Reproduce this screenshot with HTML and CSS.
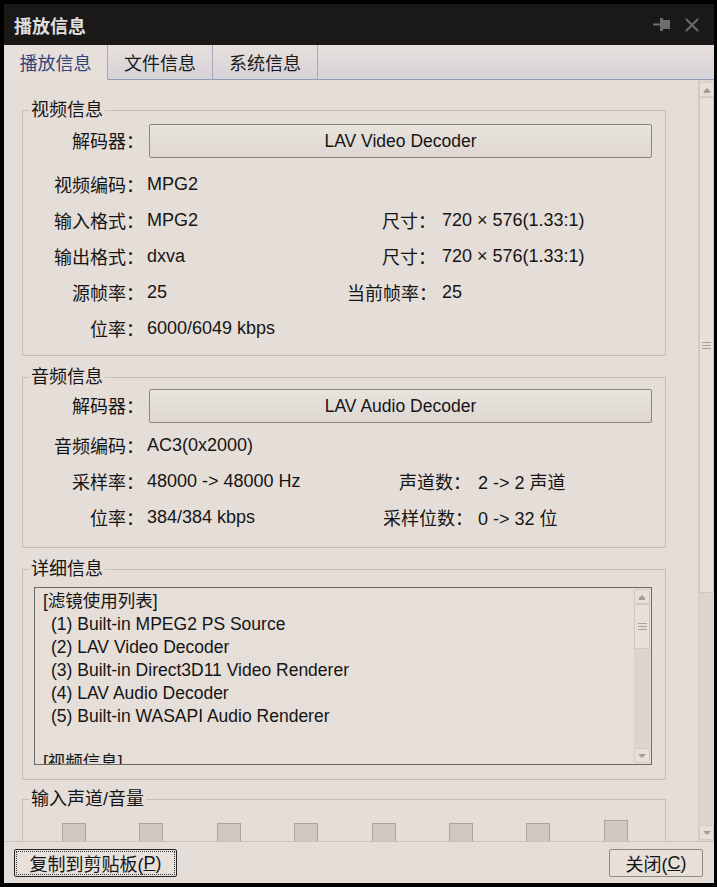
FILE: index.html
```html
<!DOCTYPE html>
<html lang="zh-CN">
<head>
    <meta charset="UTF-8">
    <title>播放信息</title>
    <link rel="stylesheet" href="styles.css">
</head>
<body>
    <div class="window">
        <div class="titlebar">
            <span class="title">播放信息</span>
            <div class="title-icons">
                <svg class="pin" width="17" height="13" viewBox="0 0 17 13">
                    <rect x="0" y="5.5" width="8" height="2" fill="#6e6e6e"/>
                    <rect x="7" y="0" width="3" height="13" fill="#6e6e6e"/>
                    <rect x="10" y="2" width="7" height="9" fill="#6e6e6e"/>
                </svg>
                <svg class="close" width="14" height="14" viewBox="0 0 14 14">
                    <path d="M1 1 L13 13 M13 1 L1 13" stroke="#6b6b6b" stroke-width="2"/>
                </svg>
            </div>
        </div>

        <div class="tabs">
            <div class="tab active">播放信息</div>
            <div class="tab">文件信息</div>
            <div class="tab">系统信息</div>
            <div class="tab-fill"></div>
        </div>

        <div class="body">
            <div class="scroll-content">
                <fieldset class="group">
                    <legend>视频信息</legend>
                    <div class="grid video-grid">
                        <div class="label">解码器：</div>
                        <div class="decoder-btn">LAV Video Decoder</div>

                        <div class="label">视频编码：</div>
                        <div class="value wide">MPG2</div>

                        <div class="label">输入格式：</div>
                        <div class="value">MPG2</div>
                        <div class="label label2">尺寸：</div>
                        <div class="value">720 × 576(1.33:1)</div>

                        <div class="label">输出格式：</div>
                        <div class="value">dxva</div>
                        <div class="label label2">尺寸：</div>
                        <div class="value">720 × 576(1.33:1)</div>

                        <div class="label">源帧率：</div>
                        <div class="value">25</div>
                        <div class="label label2">当前帧率：</div>
                        <div class="value">25</div>

                        <div class="label">位率：</div>
                        <div class="value wide">6000/6049 kbps</div>
                    </div>
                </fieldset>

                <fieldset class="group audio">
                    <legend>音频信息</legend>
                    <div class="grid audio-grid">
                        <div class="label">解码器：</div>
                        <div class="decoder-btn">LAV Audio Decoder</div>

                        <div class="label">音频编码：</div>
                        <div class="value wide">AC3(0x2000)</div>

                        <div class="label">采样率：</div>
                        <div class="value">48000 -&gt; 48000 Hz</div>
                        <div class="label label2">声道数：</div>
                        <div class="value">2 -&gt; 2 声道</div>

                        <div class="label">位率：</div>
                        <div class="value">384/384 kbps</div>
                        <div class="label label2">采样位数：</div>
                        <div class="value">0 -&gt; 32 位</div>
                    </div>
                </fieldset>

                <fieldset class="group details">
                    <legend>详细信息</legend>
                    <div class="textbox">
                        <div class="textbox-text">
                            <div class="line">[滤镜使用列表]</div>
                            <div class="line item">(1) Built-in MPEG2 PS Source</div>
                            <div class="line item">(2) LAV Video Decoder</div>
                            <div class="line item">(3) Built-in Direct3D11 Video Renderer</div>
                            <div class="line item">(4) LAV Audio Decoder</div>
                            <div class="line item">(5) Built-in WASAPI Audio Renderer</div>
                            <div class="line">&nbsp;</div>
                            <div class="line">[视频信息]</div>
                        </div>
                        <div class="sb small">
                            <div class="sb-btn"><span class="arrow-up"></span></div>
                            <div class="sb-thumb small-thumb"><span class="grip"></span></div>
                            <div class="sb-track"></div>
                            <div class="sb-btn"><span class="arrow-down"></span></div>
                        </div>
                    </div>
                </fieldset>

                <fieldset class="group volume">
                    <legend>输入声道/音量</legend>
                    <div class="bars">
                        <div class="bar"></div>
                        <div class="bar"></div>
                        <div class="bar"></div>
                        <div class="bar"></div>
                        <div class="bar"></div>
                        <div class="bar"></div>
                        <div class="bar"></div>
                        <div class="bar tall"></div>
                    </div>
                </fieldset>
            </div>

            <div class="sb main">
                <div class="sb-btn"><span class="arrow-up"></span></div>
                <div class="sb-thumb main-thumb"><span class="grip"></span></div>
                <div class="sb-track"></div>
                <div class="sb-btn"><span class="arrow-down"></span></div>
            </div>
        </div>

        <div class="footer">
            <div class="btn copy-btn"><span>复制到剪贴板(<u>P</u>)</span></div>
            <div class="btn close-btn">关闭(<u>C</u>)</div>
        </div>
    </div>
</body>
</html>
```

FILE: styles.css
```css
* { margin: 0; padding: 0; box-sizing: border-box; }
body { background: #000; font-family: "Liberation Sans", "Noto Sans CJK SC", sans-serif; font-size: 18px; color: #151515; }

.window { width: 717px; height: 887px; border: 4px solid #000; border-right-width: 3px; display: flex; flex-direction: column; background: #e5ddd7; }

/* title bar */
.titlebar { height: 41px; background: #1b1918; display: flex; align-items: center; justify-content: space-between; padding: 0 15px 0 10px; }
.title { color: #dedede; font-size: 18px; font-weight: bold; }
.title-icons { display: flex; align-items: center; gap: 15px; }
.title-icons svg { display: block; }

/* tabs */
.tabs { height: 35px; display: flex; background: linear-gradient(#e7e0db, #d5d1d8); }
.tab { height: 35px; display: flex; align-items: center; justify-content: center; width: 105px; border-right: 1px solid #a4aabd; border-bottom: 1px solid #949cb5; color: #1a1a1a; }
.tab.active { width: 104px; background: #e6dfda; border-bottom-color: #e6dfda; color: #34457a; }
.tab-fill { flex: 1; border-bottom: 1px solid #949cb5; }

/* body + scroll */
.body { height: 761px; display: flex; }
.scroll-content { flex: 1; overflow: hidden; padding-top: 20px; }

.group { margin: 0 0 0 18px; padding: 0; width: 644px; min-width: 0; border: 1px solid #c6beb9; }
.group legend { margin-left: 6px; padding: 0 2px; line-height: 20px; color: #151515; }
.audio { margin-top: 11px; }
.details { margin-top: 11px; padding-bottom: 14px; }
.volume { margin-top: 9px; height: 90px; }

.grid { display: grid; grid-auto-rows: 36px; align-items: center; padding-bottom: 9px; }
.video-grid { grid-template-columns: 124px 200px 95px 1fr; grid-template-rows: 46px; }
.audio-grid { grid-template-columns: 124px 236px 95px 1fr; grid-template-rows: 40px; padding-bottom: 12px; }
.video-grid .decoder-btn { margin-top: 4px; }
.audio-grid .decoder-btn { margin-top: 2px; }

.label { text-align: right; padding-right: 3px; white-space: nowrap; }
.label2 { padding-right: 6px; }
.audio-grid .label2 { padding-right: 7px; }
.video-grid > .label:first-child { align-self: start; margin-top: 7px; }
.audio-grid > .label:first-child { align-self: start; margin-top: 5px; }
.value { white-space: nowrap; }
.wide { grid-column: 2 / 5; }

.decoder-btn { grid-column: 2 / 5; height: 34px; margin-left: 2px; margin-right: 13px; border: 1px solid #8b8580; border-radius: 2px; background: linear-gradient(#e9e3de, #ddd6d1); display: flex; align-items: center; justify-content: center; align-self: start; font-size: 17.5px; }

/* detail text box */
.textbox { margin: 8px 13px 0 11px; height: 178px; border: 1px solid #6f6964; background: #e6ded8; display: flex; overflow: hidden; }
.textbox-text { flex: 1; padding: 2px 0 0 8px; overflow: hidden; font-size: 17.5px; }
.line { line-height: 23px; white-space: nowrap; }
.item { padding-left: 8px; }

/* scrollbars */
.sb { display: flex; flex-direction: column; background: #dcd4cf; }
.sb.main { width: 16px; border-left: 1px solid #d2cac5; padding-bottom: 1px; }
.sb.small { width: 16px; margin: 1px 1px 1px 0; }
.sb-btn { height: 15px; background: #e6dfda; border: 1px solid #d3cbc6; display: flex; align-items: center; justify-content: center; }
.sb.main .sb-btn:first-child { margin-top: 2px; }
.sb-thumb { background: #e6dfda; border: 1px solid #cfc7c2; display: flex; align-items: center; justify-content: center; }
.main-thumb { height: 496px; }
.small-thumb { height: 45px; }
.sb-track { flex: 1; }
.grip { width: 9px; height: 7px; border-top: 1px solid #a8a19c; border-bottom: 1px solid #a8a19c; position: relative; }
.grip::after { content: ''; position: absolute; left: 0; right: 0; top: 2px; border-top: 1px solid #a8a19c; }
.arrow-up { width: 0; height: 0; border-left: 4px solid transparent; border-right: 4px solid transparent; border-bottom: 4px solid #a39c97; border-top: 0; box-shadow: 0 2px 0 -1px #a39c97; }
.arrow-down { width: 0; height: 0; border-left: 4px solid transparent; border-right: 4px solid transparent; border-top: 4px solid #a39c97; }

/* volume bars */
.bars { display: flex; gap: 53.4px; padding-left: 39px; margin-top: 11px; height: 40px; }
.bar { width: 24px; height: 36px; background: #cfc8c3; border: 1px solid #aaa39e; border-bottom: 0; margin-top: 3px; }
.bar.tall { margin-top: 0; height: 39px; }

/* footer */
.footer { height: 42px; border-top: 1px solid #c9c1bc; display: flex; justify-content: space-between; align-items: flex-start; padding: 7px 11px 0 10px; }
.btn { height: 28px; display: flex; align-items: center; justify-content: center; background: #e6dfda; border-radius: 2px; }
.btn u { text-decoration: underline; }
.copy-btn { width: 163px; border: 1px solid #262626; padding: 1px; }
.copy-btn span { flex: 1; align-self: stretch; display: flex; align-items: center; justify-content: center; border: 1px dotted #3a3a3a; }
.close-btn { width: 94px; border: 1px solid #8e8782; }
```
